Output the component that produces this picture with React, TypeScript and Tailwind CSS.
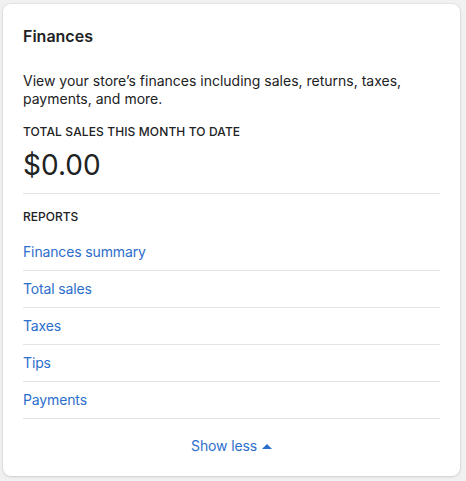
import React from "react";

const reports = ["Finances summary", "Total sales", "Taxes", "Tips", "Payments"];

export default function App() {
  return (
    <div
      className="min-h-screen bg-[#f1f1f1] pt-[4px] pl-[3px]"
      style={{ fontFamily: "Inter, 'Liberation Sans', sans-serif" }}
    >
      <div className="w-[457px] rounded-lg bg-white px-5 pt-5 pb-5 text-[#202223] shadow-[0_0_0_1px_rgba(63,63,68,0.05),0_1px_3px_rgba(63,63,68,0.15)]">
        {/* Header */}
        <h2 className="text-base leading-6 font-semibold">Finances</h2>

        <p className="mt-[24px] text-sm leading-[18px]">
          View your store’s finances including sales, returns, taxes, payments,
          and more.
        </p>

        <div className="mt-[16px] text-xs leading-4 font-medium uppercase tracking-[0.01em]">
          Total sales this month to date
        </div>
        <div className="mt-[9px] pb-[12px] border-b border-[#e1e3e5] text-[28px] leading-8">
          $0.00
        </div>

        {/* Reports */}
        <div className="mt-[15px] text-xs leading-4 font-medium uppercase">
          Reports
        </div>
        <ul className="mt-[9px]">
          {reports.map((r) => (
            <li key={r} className="border-b border-[#e1e3e5] py-2 text-sm leading-5">
              <a href="#" className="block text-[#2c6ecb] tracking-[-0.01em]">
                {r}
              </a>
            </li>
          ))}
        </ul>

        <div className="flex justify-center pt-[17px]">
          <button className="flex items-center gap-[5px] text-sm leading-5 text-[#2c6ecb] tracking-[-0.01em]">
            Show less
            <svg width="10" height="5" viewBox="0 0 10 5" fill="currentColor">
              <path d="M0 5 L5 0 L10 5 Z" />
            </svg>
          </button>
        </div>
      </div>
    </div>
  );
}
